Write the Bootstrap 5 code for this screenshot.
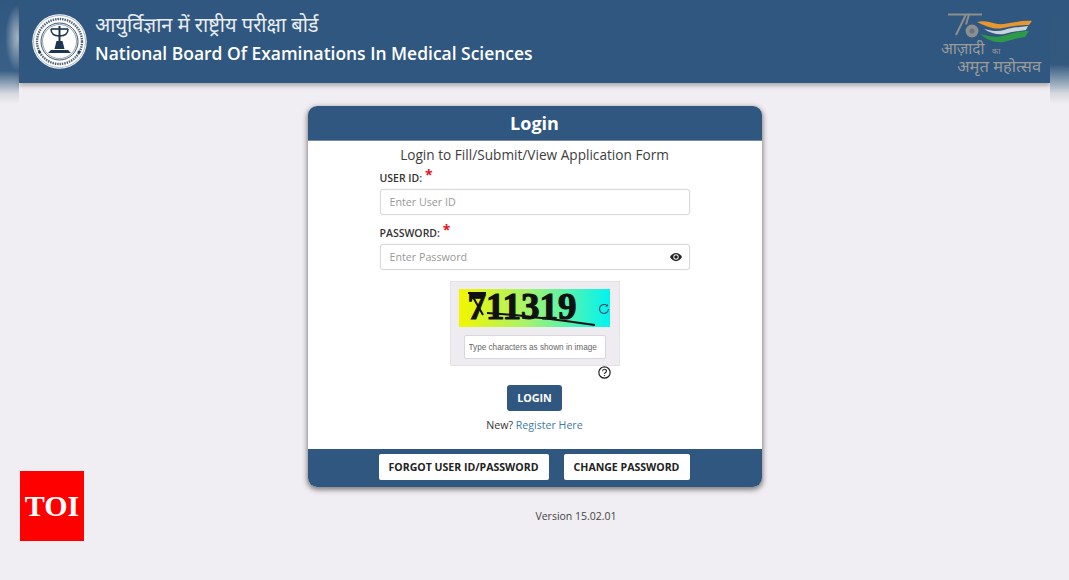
<!DOCTYPE html>
<html lang="en">
<head>
    <meta charset="UTF-8">
    <meta name="viewport" content="width=device-width, initial-scale=1.0">
    <title>National Board Of Examinations In Medical Sciences</title>
    <link href="https://cdn.jsdelivr.net/npm/bootstrap@5.3.2/dist/css/bootstrap.min.css" rel="stylesheet">
    <style>
        :root {
            --nbe-blue: #2f577f;
            --page-bg: #f0eef2;
        }

        html, body {
            height: 580px;
            overflow: hidden;
        }

        body {
            background-color: var(--page-bg);
            font-family: "Open Sans", "Noto Sans", sans-serif;
            color: #333;
        }

        .side-strip {
            width: 19px;
            height: 104px;
            flex: none;
        }

        .side-left {
            background:
                radial-gradient(ellipse 14px 34px at 100% 38px, rgba(205, 212, 220, .85), rgba(205, 212, 220, 0)),
                linear-gradient(180deg, #2f577f 0, #3a6087 68%, #8fa3b6 80%, #d6d9df 90%, #f0eef2 100%);
        }

        .side-right {
            background: linear-gradient(180deg, #2f577f 0, #34597f 62%, #8ba0b4 78%, #d6d9df 90%, #f0eef2 100%);
        }

        .top-band {
            height: 83px;
            background-color: var(--nbe-blue);
            padding: 0 8px 0 13px;
            box-shadow: 0 3px 4px rgba(60, 60, 60, .35);
        }

        .emblem {
            width: 55px;
            height: 55px;
        }

        .title-hi {
            font-family: "Noto Sans Devanagari", "Noto Sans", "Lohit Devanagari", sans-serif;
            font-size: 20px;
            line-height: 26px;
            color: #e9edf1;
            margin-top: -5px;
        }

        .title-en {
            font-size: 17.45px;
            line-height: 24px;
            font-weight: 600;
            color: #fff;
            margin-top: 1px;
        }

        .azadi {
            width: 106px;
            height: 68px;
        }

        .login-box {
            width: 454px;
            height: 381px;
            margin-top: 23px;
            background: #fff;
            border-radius: 9px;
            overflow: hidden;
            box-shadow: 0 2px 5px 1px rgba(40, 40, 40, .55);
        }

        .login-head {
            height: 35px;
            background-color: var(--nbe-blue);
            color: #fff;
            font-size: 18px;
            line-height: 35px;
            font-weight: 700;
            border-bottom: 1px solid #7c8b9a;
        }

        .login-main {
            height: 308px;
        }

        .login-sub {
            font-size: 13.65px;
            line-height: 20px;
            padding-top: 4px;
            height: 24px;
            color: #3d3d3d;
        }

        .form-col {
            width: 310px;
            margin-top: 6px;
        }

        .field-label {
            font-size: 10.5px;
            line-height: 14px;
            height: 14px;
            font-weight: 600;
            color: #333;
            margin: 0 0 4px;
        }

        .field-gap {
            margin-top: 11px;
        }

        .req {
            color: #e8101c;
            font-size: 14px;
            line-height: 0;
            font-weight: 700;
            vertical-align: 2px;
        }

        .nbe-input.form-control {
            height: 26px;
            min-height: 26px;
            padding: 0 9px;
            font-size: 10.7px;
            border: 1px solid #d9d9dd;
            border-radius: 3px;
            box-shadow: 0 0 2px rgba(0, 0, 0, .08);
        }

        .nbe-input::placeholder {
            color: #999;
            opacity: 1;
        }

        .eye-icon {
            position: absolute;
            right: 8px;
            top: 8px;
            width: 12px;
            height: 10px;
        }

        .captcha-box {
            width: 170px;
            height: 85px;
            margin-top: 11px;
            background: #eeecf0;
            border: 1px solid #e4e2e6;
            padding: 7px 9px 0 8px;
        }

        .captcha-img {
            position: relative;
            height: 38px;
            background: linear-gradient(90deg, #f2f600 0, #a6f36c 45%, #00f4f0 100%);
        }

        .captcha-code {
            font-family: "Liberation Serif", serif;
            font-size: 37px;
            line-height: 35px;
            height: 38px;
            font-weight: 700;
            color: #111;
            padding-left: 9px;
            -webkit-text-stroke: 1.1px #111;
        }

        .captcha-line {
            position: absolute;
            left: 0;
            top: 0;
            width: 151px;
            height: 38px;
        }

        .refresh-icon {
            position: absolute;
            right: 0;
            top: 14px;
            width: 12px;
            height: 12px;
        }

        .captcha-input.form-control {
            height: 24px;
            min-height: 24px;
            width: 142px;
            margin: 8px 0 0 5px;
            padding: 0 4px;
            font-family: "Liberation Sans", sans-serif;
            font-size: 8.2px;
            border: 1px solid #d8d8dc;
            border-radius: 2px;
        }

        .captcha-input::placeholder {
            color: #666;
            opacity: 1;
        }

        .help-row {
            width: 170px;
            height: 19px;
            padding-right: 9px;
        }

        .help-icon {
            width: 13px;
            height: 13px;
        }

        .btn-login {
            width: 55px;
            height: 26px;
            padding: 0;
            font-size: 10.7px;
            line-height: 26px;
            font-weight: 700;
            color: #fff;
            background-color: var(--nbe-blue);
            border: 0;
            border-radius: 3px;
        }

        .new-line {
            font-size: 10.6px;
            line-height: 16px;
            margin-top: 6px;
        }

        .new-line a {
            color: #3f7ba8;
            text-decoration: none;
        }

        .login-foot {
            height: 38px;
            background-color: var(--nbe-blue);
            gap: 15px;
            padding: 5px 1px 0 0;
        }

        .btn-foot {
            height: 26px;
            padding: 0;
            font-size: 10.55px;
            line-height: 26px;
            font-weight: 700;
            color: #222;
            background: #fff;
            border: 0;
            border-radius: 2px;
        }

        .foot-forgot {
            width: 170px;
        }

        .foot-change {
            width: 126px;
        }

        .version-text {
            font-size: 10.5px;
            line-height: 16px;
            margin: 21px 0 0 83px;
            color: #444;
        }

        .toi-badge {
            position: absolute;
            left: 20px;
            top: 471px;
            width: 64px;
            height: 70px;
            background: #fe0000;
            color: #fff;
            font-family: "Liberation Serif", serif;
            font-size: 30px;
            line-height: 70px;
            font-weight: 700;
            text-align: center;
        }
    </style>
</head>
<body>
    <div class="d-flex">
        <div class="side-strip side-left"></div>
        <div class="flex-grow-1 d-flex flex-column align-items-center">
            <!-- Header band -->
            <header class="top-band w-100 d-flex align-items-center justify-content-between">
                <div class="d-flex align-items-center gap-2">
                    <svg class="emblem" viewBox="0 0 55 55">
                        <circle cx="27.5" cy="27.5" r="27.2" fill="#fff"/>
                        <circle cx="27.5" cy="27.5" r="26" fill="none" stroke="#8b9aa9" stroke-width=".7"/>
                        <circle cx="27.500" cy="27.500" r="22.500" fill="none" stroke="#4d6378" stroke-width="2.400" stroke-dasharray="1.500 .9"/>
                        <circle cx="27.5" cy="27.5" r="18.500" fill="none" stroke="#27405c" stroke-width=".9"/>
                        <circle cx="27.5" cy="27.5" r="17" fill="none" stroke="#27405c" stroke-width=".5"/>
                        <path d="M19 15h17" fill="none" stroke="#1c3550" stroke-width="1.600"/>
                        <path d="M19 15c0 6 4 7 8.500 7s8.500-1 8.500-7" fill="none" stroke="#1c3550" stroke-width="1.500"/>
                        <path d="M26.500 12h2v17h-2z" fill="#1c3550"/>
                        <path d="M24.500 27h6l2 8h-10zM19 36h17l3 3H16z" fill="#1c3550"/>
                        <circle cx="7.500" cy="38" r="1.500" fill="#27405c"/>
                        <circle cx="47" cy="38" r="1.500" fill="#27405c"/>
                    </svg>
                    <div>
                        <div class="title-hi">आयुर्विज्ञान में राष्ट्रीय परीक्षा बोर्ड</div>
                        <div class="title-en">National Board Of Examinations In Medical Sciences</div>
                    </div>
                </div>
                <svg class="azadi" viewBox="0 0 106 68">
                    <path d="M12 6.500h18L20 27M29 6.500h17M33 6.500l-3 10" fill="none" stroke="#8e8f8a" stroke-width="2"/>
                    <circle cx="36" cy="23" r="6.500" fill="#8a8f92"/>
                    <circle cx="36" cy="23" r="2.500" fill="#6c7378"/>
                    <path d="M41 14c8-2 14 1 21 2s21-4 34-3l-3 4c-10 0-17 1-26 3-10 2-17-2-26-6z" fill="#e8962e"/>
                    <path d="M48 21c8 2 14 3 20 1s14-3 24-4l-2 4c-8 1-15 2-22 4-7 1-14-1-20-5z" fill="#c9d3da"/>
                    <path d="M44 26c8 2 14 4 22 2s16-5 27-5l-4 6c-8 1-14 3-21 5-9 1-17-2-24-8z" fill="#2d9a4a"/>
                    <text x="5" y="46" font-family="Noto Sans, sans-serif" font-size="15.500" fill="#9a9c9c">आज़ादी</text>
                    <text x="56" y="46" font-family="Noto Sans, sans-serif" font-size="8" fill="#9a9c9c">का</text>
                    <text x="21" y="64" font-family="Noto Sans, sans-serif" font-size="16.500" fill="#9a9c9c">अमृत महोत्सव</text>
                </svg>
            </header>

            <!-- Login card -->
            <main class="login-box text-center">
                <div class="login-head">Login</div>
                <div class="login-main d-flex flex-column align-items-center">
                    <div class="login-sub">Login to Fill/Submit/View Application Form</div>
                    <div class="form-col text-start">
                        <label class="field-label d-block" for="userId">USER ID: <span class="req">*</span></label>
                        <input class="form-control nbe-input" id="userId" type="text" placeholder="Enter User ID">
                        <label class="field-label field-gap d-block" for="pwd">PASSWORD: <span class="req">*</span></label>
                        <div class="position-relative">
                            <input class="form-control nbe-input" id="pwd" type="password" placeholder="Enter Password">
                            <svg class="eye-icon" viewBox="0 0 16 12">
                                <path d="M0 6c2-3.500 5-5.500 8-5.500S14 2.500 16 6c-2 3.500-5 5.500-8 5.500S2 9.500 0 6z" fill="#222"/>
                                <circle cx="8" cy="6" r="3.600" fill="#fff"/>
                                <circle cx="8" cy="6" r="2.400" fill="#222"/>
                            </svg>
                        </div>
                    </div>
                    <div class="captcha-box text-start">
                        <div class="captcha-img">
                            <div class="captcha-code">711319</div>
                            <svg class="captcha-line" viewBox="0 0 151 38">
                                <path d="M9 4h18M14 8l10 18M28 24c36 2 72 7 108 12" fill="none" stroke="#111" stroke-width="2"/>
                            </svg>
                            <svg class="refresh-icon" viewBox="0 0 12 12">
                                <path d="M10.500 6a4.500 4.500 0 1 1-1.400-3.300" fill="none" stroke="#26495f" stroke-width="1.100"/>
                                <path d="M9.800 0.800v2.600H7.200z" fill="#26495f"/>
                            </svg>
                        </div>
                        <input class="form-control captcha-input" type="text" placeholder="Type characters as shown in image">
                    </div>
                    <div class="help-row d-flex justify-content-end align-items-start">
                        <svg class="help-icon" viewBox="0 0 13 13">
                            <circle cx="6.500" cy="6.500" r="5.700" fill="none" stroke="#222" stroke-width="1.200"/>
                            <path d="M4.600 5.200c0-2.500 3.900-2.500 3.900-.2 0 1.500-2 1.400-2 3" fill="none" stroke="#222" stroke-width="1.100"/>
                            <circle cx="6.500" cy="9.600" r=".7" fill="#222"/>
                        </svg>
                    </div>
                    <button class="btn btn-login" type="button">LOGIN</button>
                    <div class="new-line">New? <a href="#">Register Here</a></div>
                </div>
                <div class="login-foot d-flex justify-content-center align-items-start">
                    <button class="btn btn-foot foot-forgot" type="button">FORGOT USER ID/PASSWORD</button>
                    <button class="btn btn-foot foot-change" type="button">CHANGE PASSWORD</button>
                </div>
            </main>

            <div class="version-text">Version 15.02.01</div>
        </div>
        <div class="side-strip side-right"></div>
    </div>

    <div class="toi-badge">TOI</div>

    <script src="https://cdn.jsdelivr.net/npm/bootstrap@5.3.2/dist/js/bootstrap.bundle.min.js"></script>
</body>
</html>
